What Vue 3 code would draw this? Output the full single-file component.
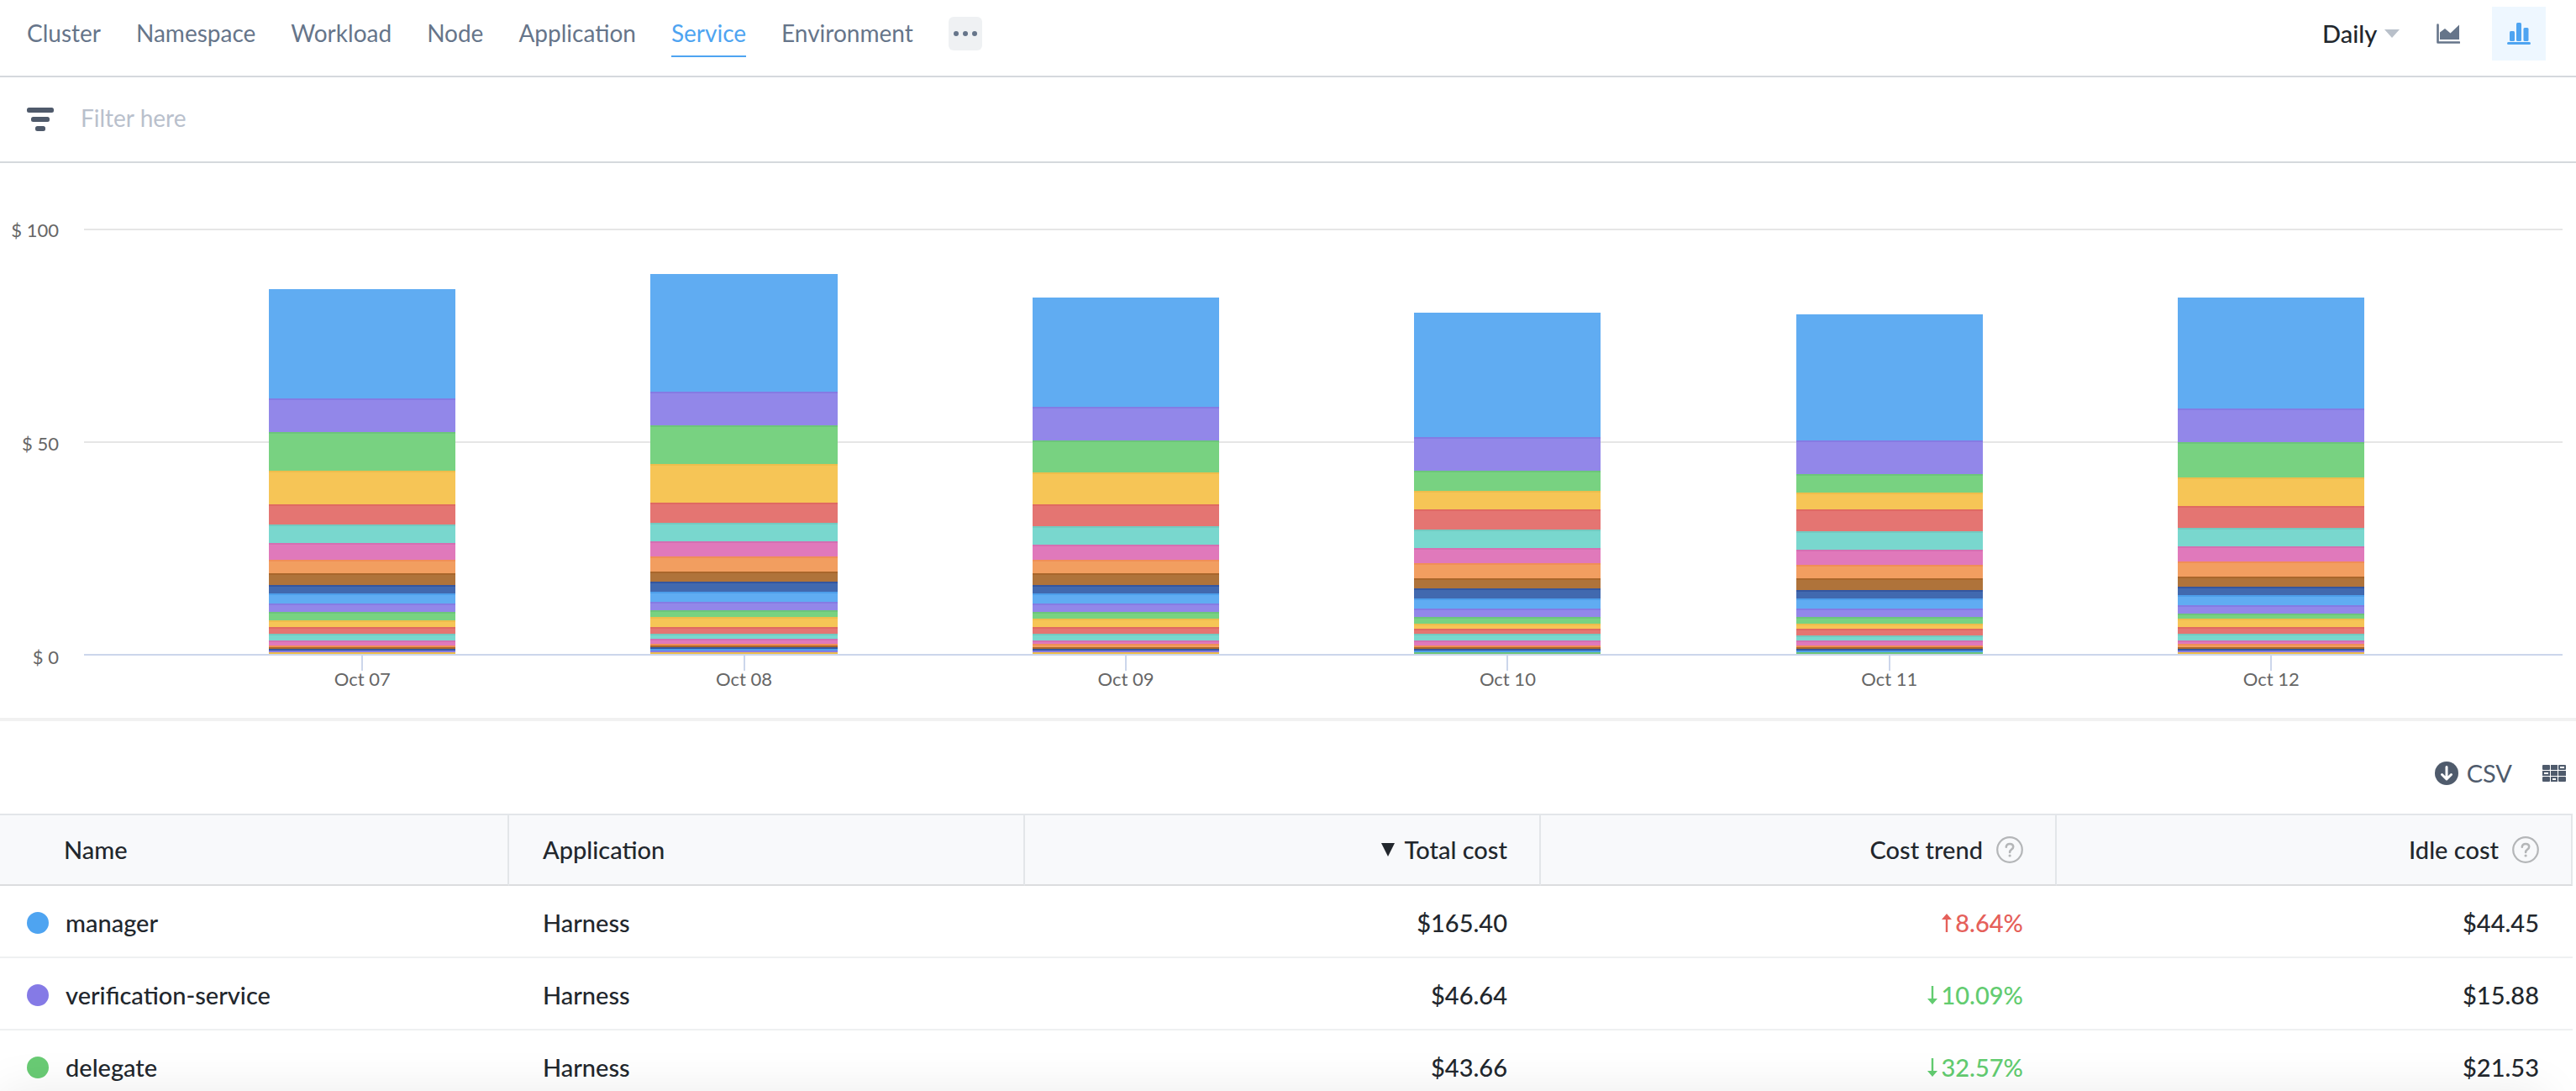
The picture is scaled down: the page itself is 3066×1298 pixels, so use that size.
<script setup>
import { ref } from 'vue'

const tabs = ['Cluster', 'Namespace', 'Workload', 'Node', 'Application', 'Service', 'Environment']
const activeTab = ref('Service')
const period = ref('Daily')
const filter = ref('')

const palette = ['blue', 'purple', 'green', 'yellow', 'red', 'teal', 'pink', 'orange', 'brown', 'navy']

// Segment sizes, top of the stack first; AXIS_MAX of them make up $ 100.
const AXIS_MAX = 253
const days = [
  { label: 'Oct 07', stack: [65, 20, 23, 20, 12, 11, 10, 8, 7, 5, 6, 5, 5, 4, 4, 4, 3, 1, 1, 1, 0, 1, 0, 1] },
  { label: 'Oct 08', stack: [70, 20, 23, 23, 12, 11, 9, 9, 6, 6, 6, 5, 4, 6, 4, 3, 3, 1, 1, 1, 1, 1, 0, 1] },
  { label: 'Oct 09', stack: [65, 20, 19, 19, 13, 11, 9, 8, 7, 5, 6, 5, 4, 5, 4, 4, 2, 2, 1, 1, 0, 1, 0, 1] },
  { label: 'Oct 10', stack: [74, 20, 12, 11, 12, 11, 9, 9, 6, 6, 6, 5, 4, 3, 3, 4, 3, 1, 1, 1, 1, 0, 1] },
  { label: 'Oct 11', stack: [75, 20, 11, 10, 13, 11, 9, 8, 7, 5, 6, 5, 4, 3, 4, 3, 3, 1, 1, 1, 1, 0, 1] },
  { label: 'Oct 12', stack: [66, 20, 21, 17, 13, 11, 9, 9, 6, 5, 6, 5, 3, 5, 4, 4, 2, 2, 1, 1, 0, 1, 0, 1] },
]

const segments = (stack) =>
  stack
    .map((size, i) => ({ id: i, color: palette[i % palette.length], height: (size / AXIS_MAX) * 100 + '%', size }))
    .filter((s) => s.size > 0)

const rows = [
  { name: 'manager', color: 'blue', app: 'Harness', total: '$165.40', trend: '8.64%', up: true, idle: '$44.45' },
  { name: 'verification-service', color: 'purple', app: 'Harness', total: '$46.64', trend: '10.09%', up: false, idle: '$15.88' },
  { name: 'delegate', color: 'green', app: 'Harness', total: '$43.66', trend: '32.57%', up: false, idle: '$21.53' },
]
</script>

<template>
  <main class="page">
    <header class="topbar">
      <nav class="tabs">
        <a
          v-for="tab in tabs"
          :key="tab"
          href="#"
          class="tab"
          :class="{ active: tab === activeTab }"
          @click.prevent="activeTab = tab"
        >{{ tab }}</a>
        <button class="more" type="button" aria-label="More">
          <svg width="28" height="8" viewBox="0 0 28 8"><circle cx="3" cy="4" r="3" /><circle cx="14" cy="4" r="3" /><circle cx="25" cy="4" r="3" /></svg>
        </button>
      </nav>
      <div class="tools">
        <label class="period">
          <select v-model="period" aria-label="Period">
            <option>Daily</option>
          </select>
          <svg width="18" height="10" viewBox="0 0 18 10"><path d="M0 0h18L9 10z" /></svg>
        </label>
        <button class="view" type="button" aria-label="Area chart">
          <svg width="28" height="24" viewBox="0 0 28 24">
            <path d="M1.500 1.500V22.500H27" fill="none" stroke="currentColor" stroke-width="2.600" stroke-linecap="round" stroke-linejoin="round" />
            <path d="M4 19V10.500L10 6l6.500 5.500L27 1.500V19z" fill="currentColor" />
          </svg>
        </button>
        <button class="view selected" type="button" aria-label="Column chart">
          <svg width="28" height="26" viewBox="0 0 28 26" fill="currentColor">
            <rect x="3" y="10" width="6" height="12" rx="1.500" />
            <rect x="11" y="0" width="6" height="22" rx="1.500" />
            <rect x="19.500" y="6" width="6" height="16" rx="1.500" />
            <rect x="0" y="23" width="28" height="3" rx="1.500" />
          </svg>
        </button>
      </div>
    </header>

    <div class="filterbar">
      <svg width="32" height="28" viewBox="0 0 32 28" fill="currentColor">
        <rect width="32" height="6" rx="2.500" />
        <rect x="5" y="11" width="22" height="6" rx="2.500" />
        <rect x="10" y="22" width="12" height="6" rx="2.500" />
      </svg>
      <input v-model="filter" type="text" placeholder="Filter here" aria-label="Filter" />
    </div>

    <section class="chart">
      <div class="y-axis">
        <span>$ 100</span>
        <span>$ 50</span>
        <span>$ 0</span>
      </div>
      <div class="plot">
        <div class="lines"><i></i><i></i><i class="base"></i></div>
        <div class="days">
          <div v-for="day in days" :key="day.label" class="day">
            <div class="stack">
              <div
                v-for="s in segments(day.stack)"
                :key="s.id"
                class="segment"
                :class="s.color"
                :style="{ height: s.height }"
              ></div>
            </div>
            <i class="tick"></i>
            <span class="day-label">{{ day.label }}</span>
          </div>
        </div>
      </div>
    </section>

    <div class="actions">
      <button class="csv" type="button">
        <svg width="28" height="28" viewBox="0 0 28 28">
          <circle cx="14" cy="14" r="14" fill="currentColor" />
          <path d="M14 6.500v14M8.500 15.500l5.500 5.500 5.500-5.500" fill="none" stroke="#fff" stroke-width="3" stroke-linecap="round" stroke-linejoin="round" />
        </svg>
        CSV
      </button>
      <button class="columns" type="button" aria-label="Columns">
        <svg width="28" height="20" viewBox="0 0 28 20">
          <g fill="currentColor">
            <rect width="9" height="6" rx="1" /><rect x="10" width="8" height="6" /><rect x="19" width="9" height="6" rx="1" />
            <rect y="7" width="9" height="6" /><rect x="10" y="7" width="8" height="6" /><rect x="19" y="7" width="9" height="6" />
            <rect y="14" width="9" height="6" rx="1" /><rect x="10" y="14" width="8" height="6" /><rect x="19" y="14" width="9" height="6" rx="1" />
          </g>
          <g fill="#fff">
            <rect x="21" y="2" width="5" height="2" /><rect x="2" y="9" width="5" height="2" /><rect x="12" y="16" width="4" height="2" />
          </g>
        </svg>
      </button>
    </div>

    <div class="table-wrap">
      <table>
        <colgroup><col class="first" /><col /><col /><col /><col /></colgroup>
        <thead>
          <tr>
            <th scope="col" class="name">Name</th>
            <th scope="col">Application</th>
            <th scope="col" class="num">
              <div class="head">
                <svg class="sort" width="16" height="16" viewBox="0 0 16 16"><path d="M0 0h16L8 16z" /></svg>
                Total cost
              </div>
            </th>
            <th v-for="title in ['Cost trend', 'Idle cost']" :key="title" scope="col" class="num">
              <div class="head helped">
                {{ title }}
                <svg width="32" height="32" viewBox="0 0 32 32" fill="none" stroke="#b4b6b8">
                  <circle cx="16" cy="16" r="14.800" stroke-width="2.200" />
                  <path d="M11.800 12.800c0-2.300 1.800-3.800 4.200-3.800s4.200 1.400 4.200 3.600c0 3-4.100 2.900-4.100 6.300" stroke-width="2.600" stroke-linecap="round" />
                  <circle cx="16.100" cy="23" r="1.600" fill="#b4b6b8" stroke="none" />
                </svg>
              </div>
            </th>
          </tr>
        </thead>
        <tbody>
          <tr v-for="row in rows" :key="row.name">
            <td class="name">
              <div class="service"><i class="dot" :class="row.color"></i>{{ row.name }}</div>
            </td>
            <td>{{ row.app }}</td>
            <td class="num">{{ row.total }}</td>
            <td class="num">
              <div class="trend" :class="row.up ? 'up' : 'down'">
                <svg width="12" height="22" viewBox="0 0 12 22" fill="currentColor">
                  <path v-if="row.up" d="M6 0l6 7H7.200v15H4.800V7H0z" />
                  <path v-else d="M6 22l6-7H7.200V0H4.800v15H0z" />
                </svg>
                {{ row.trend }}
              </div>
            </td>
            <td class="num">{{ row.idle }}</td>
          </tr>
        </tbody>
      </table>
    </div>
    <div class="scroll-shadow"></div>
  </main>
</template>

<style>
body {
  margin: 0;
  background: #fff;
}
</style>

<style scoped>
.page {
  position: relative;
  height: 100vh;
  overflow: hidden;
  font-family: Lato, "Open Sans", sans-serif;
  font-size: 28px;
  color: #22272d;
}

button,
select,
input {
  margin: 0;
  padding: 0;
  border: 0;
  background: none;
  font: inherit;
  color: inherit;
}

svg {
  display: block;
  flex: none;
}

.topbar {
  display: flex;
  justify-content: space-between;
  align-items: center;
  padding: 8px 36px 18px 32px;
  border-bottom: 2px solid #d5d9dd;
}

.tabs {
  display: flex;
  align-items: center;
  gap: 42px;
}

.tab {
  line-height: 54px;
  border-bottom: 2px solid transparent;
  color: #66758a;
  text-decoration: none;
}

.tab.active {
  color: #4ea4f1;
  border-color: #4ea4f1;
}

.more {
  display: flex;
  align-items: center;
  justify-content: center;
  width: 40px;
  height: 40px;
  border-radius: 6px;
  background: #eff1f3;
}

.more svg {
  fill: #66758a;
}

.tools {
  display: flex;
  align-items: center;
  gap: 20px;
}

.period {
  display: flex;
  align-items: center;
  gap: 8px;
  padding-right: 6px;
}

.period select {
  appearance: none;
  font-size: 29px;
  font-weight: 500;
  line-height: 36px;
}

.period svg {
  fill: #b9c0ca;
}

.view {
  display: flex;
  align-items: center;
  justify-content: center;
  width: 64px;
  height: 64px;
  color: #66758a;
}

.view.selected {
  background: #eef7ff;
  color: #4ea4f1;
}

.filterbar {
  display: flex;
  align-items: center;
  gap: 32px;
  height: 100px;
  padding: 0 32px;
  border-bottom: 2px solid #d5d9dd;
  color: #4f5a6b;
}

.filterbar input {
  flex: 1;
  height: 56px;
  padding-bottom: 4px;
  outline: 0;
}

.filterbar input::placeholder {
  color: #b9c0cc;
  opacity: 1;
}

.chart {
  display: flex;
  gap: 30px;
  padding: 70px 16px 36px 0;
  border-bottom: 4px solid #f1f1f1;
  font-size: 22px;
  line-height: 20px;
  color: #666;
}

.y-axis {
  display: flex;
  flex-direction: column;
  justify-content: space-between;
  width: 70px;
  height: 528px;
  text-align: right;
}

.plot {
  flex: 1;
  display: grid;
  margin-top: 8px;
}

.lines,
.days {
  grid-area: 1 / 1;
}

.lines {
  display: flex;
  flex-direction: column;
  justify-content: space-between;
  height: 508px;
}

.lines i {
  height: 2px;
  background: #e6e6e6;
}

.lines .base {
  background: #ccd6eb;
}

.days {
  display: grid;
  grid-template-columns: 1040fr repeat(6, 4544fr) 1196fr;
}

.day {
  display: flex;
  flex-direction: column;
  align-items: center;
}

.day:first-child {
  grid-column-start: 2;
}

.stack {
  display: flex;
  flex-direction: column;
  justify-content: flex-end;
  width: 48.9%;
  height: 506px;
}

.segment {
  flex: none;
  box-sizing: border-box;
  border-top: 2px solid;
}

.segment:first-child {
  border-top: 0;
}

.tick {
  width: 2px;
  height: 18px;
  margin-top: 2px;
  background: #ccd6eb;
}

.segment.blue { background: #60acf2; border-color: #4d9eea; }
.segment.purple { background: #9287e9; border-color: #857be3; }
.segment.green { background: #78d281; border-color: #6cc57b; }
.segment.yellow { background: #f6c556; border-color: #edbd4c; }
.segment.red { background: #e47572; border-color: #e06962; }
.segment.teal { background: #79d7ce; border-color: #74c9c0; }
.segment.pink { background: #e079bb; border-color: #d46fb2; }
.segment.orange { background: #f29e60; border-color: #f08e57; }
.segment.brown { background: #af733a; border-color: #a9662b; }
.segment.navy { background: #4169af; border-color: #34569f; }

.actions {
  display: flex;
  align-items: center;
  justify-content: flex-end;
  gap: 36px;
  box-sizing: border-box;
  height: 110px;
  padding: 14px 12px 0;
  color: #4f5b6c;
}

.csv {
  display: flex;
  align-items: center;
  gap: 10px;
  font-size: 29px;
  line-height: 36px;
}

.table-wrap {
  padding-right: 4px;
}

table {
  width: 100%;
  table-layout: fixed;
  border-spacing: 0;
  font-size: 29px;
  font-weight: 500;
}

.first {
  width: 19.79%;
}

th,
td {
  box-sizing: border-box;
  height: 86px;
  padding: 0 40px;
  text-align: left;
  line-height: 36px;
}

th {
  padding-right: 38px;
  border: solid #e3e6e9;
  border-width: 2px 2px 2px 0;
  border-bottom-color: #dcdddf;
  background: #f8f9fb;
  font-weight: 500;
}

td {
  padding-top: 4px;
  border-bottom: 2px solid #eff0f1;
}

th.name {
  padding-left: 76px;
}

td.name {
  padding-left: 32px;
}

.num {
  text-align: right;
}

.service,
.head,
.trend {
  display: flex;
  align-items: center;
}

.service {
  gap: 20px;
}

.head,
.trend {
  justify-content: flex-end;
}

.head {
  gap: 12px;
}

.head.helped {
  gap: 16px;
}

.sort {
  fill: #22272d;
}

.dot {
  width: 26px;
  height: 26px;
  border-radius: 50%;
}

.dot.blue { background: #4ea4f1; }
.dot.purple { background: #857ae6; }
.dot.green { background: #69cb74; }

.trend {
  gap: 4px;
}

.up {
  color: #e5605a;
}

.down {
  color: #62cc70;
}

.scroll-shadow {
  position: absolute;
  right: 36px;
  bottom: -60px;
  left: 0;
  height: 60px;
  box-shadow: 0 0 56px rgba(0, 0, 0, 0.08);
}
</style>
